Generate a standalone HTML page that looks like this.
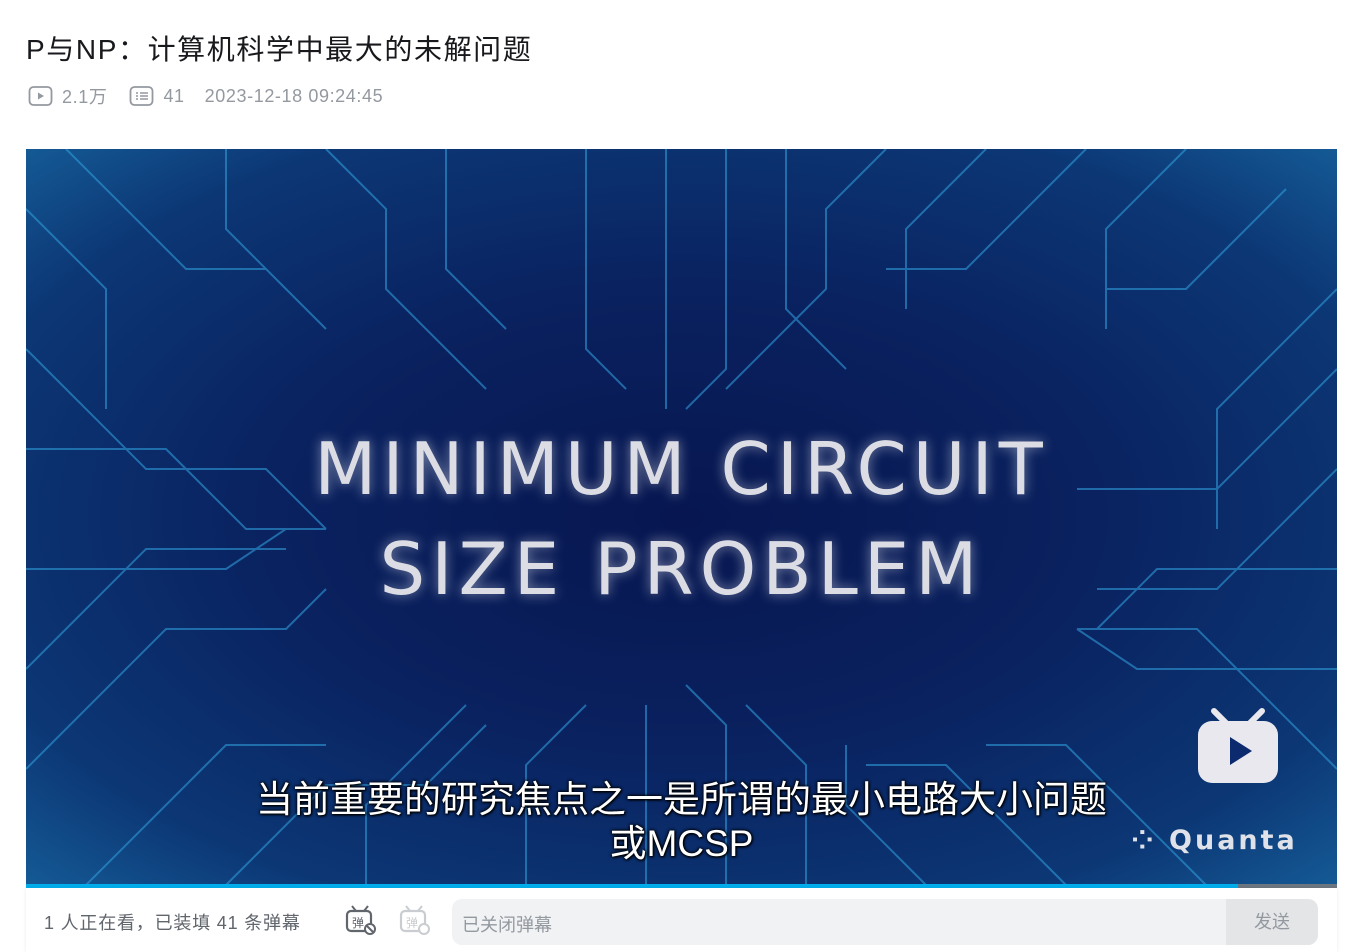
<!DOCTYPE html>
<html><head><meta charset="utf-8"><style>
*{margin:0;padding:0;box-sizing:border-box}
body{width:1351px;height:952px;background:#fff;font-family:"Liberation Sans","Noto Sans CJK SC",sans-serif;position:relative;overflow:hidden}
h1{position:absolute;left:26px;top:28px;font-size:28px;font-weight:400;color:#18191c;white-space:nowrap;letter-spacing:1.6px}
.meta{position:absolute;left:28px;top:83px;font-size:18px;color:#9499a0;display:flex;align-items:center;white-space:nowrap;letter-spacing:.6px}
.video{position:absolute;left:26px;top:149px;width:1311px;height:736px;background:radial-gradient(ellipse at 50% 50%,#071650 0%,#0a2260 45%,#0c3775 80%,#145a95 100%);overflow:hidden}
.big{position:absolute;left:0;width:100%;text-align:center;color:#dcdde4;font-family:"DejaVu Sans",sans-serif;font-weight:400;letter-spacing:6px;text-shadow:0 0 12px rgba(255,255,255,.5)}
.sub{position:absolute;width:100%;text-align:center;color:#fff;font-size:37px;text-shadow:0 0 3px #000,0 0 3px #000,1px 1px 2px #000;letter-spacing:0px}
.prog{position:absolute;left:26px;top:884px;width:1311px;height:4px;background:#6d7780}
.prog div{width:1212px;height:100%;background:#00aeec}
.bar{position:absolute;left:26px;top:888px;width:1311px;height:64px;background:#fff;box-shadow:0 0 4px rgba(0,0,0,.08)}
</style></head><body>
<h1>P与NP：计算机科学中最大的未解问题</h1>
<div class="meta">
<svg width="26" height="22" viewBox="0 0 26 22"><rect x="1.5" y="2" width="22" height="18" rx="4" fill="none" stroke="#9499a0" stroke-width="1.8"/><path d="M10 7.5v7l6-3.5z" fill="#9499a0"/></svg>
<span style="margin-left:8px">2.1万</span>
<svg style="margin-left:22px" width="26" height="22" viewBox="0 0 26 22"><rect x="1.5" y="2" width="22" height="18" rx="4" fill="none" stroke="#9499a0" stroke-width="1.8"/><path d="M7 8h2M11 8h8M7 11h2M11 11h8M7 14h2M11 14h8" stroke="#9499a0" stroke-width="1.5"/></svg>
<span style="margin-left:8px">41</span>
<span style="margin-left:20px">2023-12-18 09:24:45</span>
</div>
<div class="video">
<svg width="1311" height="736" style="position:absolute;left:0;top:0" stroke="#2f9ad8" stroke-width="2" fill="none" opacity=".6">
<path d="M0 60l80 80v120M40 0l120 120h80l60 60M200 0v80l80 80M300 0l60 60v80l100 100M420 0v120l60 60M560 0v200l40 40M640 0v260M700 0v220l-40 40M760 0v160l60 60M860 0l-60 60v80l-100 100M960 0l-80 80v80M1060 0l-120 120h-80M1160 0l-80 80v100M1260 40l-100 100h-80M1311 140l-120 120v120M0 200l120 120h120l60 60M0 300h140l80 80h80M0 420h200l60-40M0 520l120-120h140M0 620l140-140h120l40-40M60 736l140-140h100M200 736l100-100h100l60-60M340 736v-80l100-100M500 736v-120l60-60M620 736v-180M700 736v-160l-40-40M780 736v-120l-60-60M900 736l-80-80v-60M1040 736l-120-120h-80M1180 736l-140-140h-80M1311 620l-140-140h-120M1311 520h-200l-60-40M1311 420h-180l-60 60M1311 320l-120 120h-120M1311 220l-120 120h-140"/>
</svg>
<div class="big" style="top:278px;font-size:72px">MINIMUM CIRCUIT</div>
<div class="big" style="top:378px;font-size:72px">SIZE PROBLEM</div>
<div class="sub" style="top:620px">当前重要的研究焦点之一是所谓的最小电路大小问题</div>
<div class="sub" style="top:664px">或MCSP</div>
<svg style="position:absolute;left:1170px;top:556px" width="84" height="82" viewBox="0 0 84 82"><path d="M18 6l12 12M66 6l-12 12" stroke="#e8e8ee" stroke-width="6" stroke-linecap="round"/><rect x="2" y="16" width="80" height="62" rx="14" fill="#e8e8ee"/><path d="M34 32v28l22-14z" fill="#0c2a6e"/></svg>
<div style="position:absolute;left:1105px;top:676px;color:#e0e2ea;font-size:27px;font-weight:bold;letter-spacing:3px;font-family:'DejaVu Sans',sans-serif">⁘ Quanta</div>
</div>
<div class="prog"><div></div></div>
<div class="bar">
<div style="position:absolute;left:18px;top:21px;font-size:18px;color:#61666d;white-space:nowrap;letter-spacing:.8px">1 人正在看，已装填 41 条弹幕</div>
<svg style="position:absolute;left:318px;top:16px" width="34" height="32" viewBox="0 0 34 32"><path d="M8 2l4 5M24 2l-4 5" stroke="#61666d" stroke-width="2"/><rect x="3" y="7" width="24" height="20" rx="4" fill="none" stroke="#61666d" stroke-width="2.2"/><text x="8" y="23" font-size="12" fill="#61666d">弹</text><circle cx="26" cy="25" r="5" fill="#fff" stroke="#61666d" stroke-width="2"/><path d="M23 22l6 6" stroke="#61666d" stroke-width="2"/></svg>
<svg style="position:absolute;left:372px;top:16px" width="34" height="32" viewBox="0 0 34 32"><path d="M8 2l4 5M24 2l-4 5" stroke="#c9ccd0" stroke-width="2"/><rect x="3" y="7" width="24" height="20" rx="4" fill="none" stroke="#c9ccd0" stroke-width="2.2"/><text x="8" y="23" font-size="12" fill="#c9ccd0">弹</text><circle cx="26" cy="25" r="5" fill="#fff" stroke="#c9ccd0" stroke-width="2"/></svg>
<div style="position:absolute;left:426px;top:11px;width:866px;height:46px;background:#f1f2f3;border-radius:10px;overflow:hidden">
<div style="position:absolute;left:10px;top:12px;font-size:18px;color:#9499a0">已关闭弹幕</div>
<div style="position:absolute;right:0;top:0;width:92px;height:46px;background:#e3e5e7;color:#9499a0;font-size:18px;text-align:center;line-height:46px">发送</div>
</div>
</div>
</body></html>
